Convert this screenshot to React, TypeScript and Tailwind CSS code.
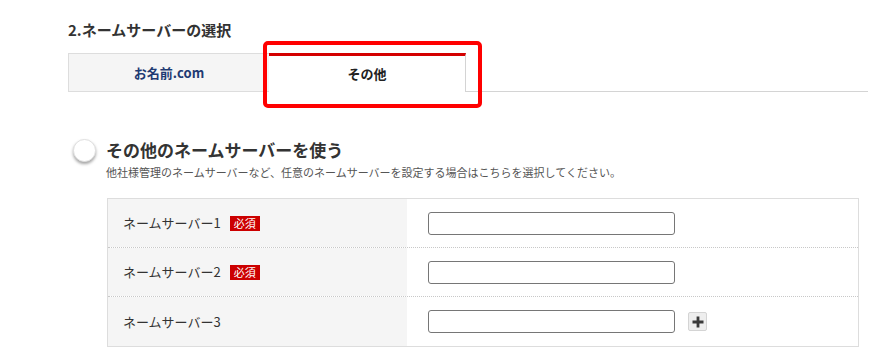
import React from 'react';

const font = { fontFamily: '"Noto Sans CJK JP", "Noto Sans", sans-serif' };

function Badge() {
  return (
    <span className="ml-[9px] inline-flex h-[15px] w-[30px] items-center justify-center bg-[#cc0000] text-[11px] leading-none text-white">
      必須
    </span>
  );
}

function Row({ label, required, plus, last }: { label: string; required?: boolean; plus?: boolean; last?: boolean }) {
  return (
    <div className={`flex h-[49px] ${last ? '' : 'border-b border-dotted border-[#c8c8c8]'}`}>
      <div className="flex w-[299px] items-center bg-[#f5f5f5] pl-[15px] text-[13px] text-[#333]">
        <span>{label}</span>
        {required && <Badge />}
      </div>
      <div className="flex flex-1 items-center pl-[21px]">
        <input className="h-[23px] w-[247px] rounded-[3px] border border-[#767676] bg-white" />
        {plus && (
          <button className="ml-[13px] flex h-[19px] w-[19px] items-center justify-center rounded-[2px] border border-[#d4d4d4] bg-[#eeeeee]">
            <svg width="14" height="14" viewBox="0 0 14 14">
              <path d="M7 1.5v11M1.5 7h11" stroke="#3a3a3a" strokeWidth="2.8" />
            </svg>
          </button>
        )}
      </div>
    </div>
  );
}

export default function App() {
  return (
    <div className="relative h-[350px] w-[873px] overflow-hidden bg-white" style={font}>
      <div className="w-[868px] pl-[68px] pt-[20px]">
        <h2 className="text-[15px] font-bold leading-[20px] text-[#333]">2.ネームサーバーの選択</h2>

        <div className="mt-[13px] flex h-[39px]">
          <div className="flex w-[201px] items-center justify-center border-l border-t border-b border-[#dddddd] bg-[#f5f5f5] text-[13px] font-bold text-[#1f3b73]">
            お名前.com
          </div>
          <div className="flex w-[197px] items-center justify-center border-t-[3px] border-r border-t-[#d40000] border-r-[#d4d4d4] bg-white text-[13px] font-bold text-[#222]">
            その他
          </div>
          <div className="flex-1 border-b border-[#d4d4d4]" />
        </div>

        <div className="mt-[46px] flex h-[24px] items-center pl-[5px]">
          <div className="h-[23px] w-[23px] rounded-full border border-[#e0e0e0] bg-white shadow-[0_2px_3px_rgba(0,0,0,0.35)]" />
          <h3 className="ml-[10px] text-[17px] font-bold leading-[24px] text-[#333]">その他のネームサーバーを使う</h3>
        </div>
        <p className="ml-[38px] mt-[2px] text-[11px] leading-[16px] text-[#555]">
          他社様管理のネームサーバーなど、任意のネームサーバーを設定する場合はこちらを選択してください。
        </p>

        <div className="ml-[39px] mt-[18px] w-[752px] border border-[#dddddd]">
          <Row label="ネームサーバー1" required />
          <Row label="ネームサーバー2" required />
          <Row label="ネームサーバー3" plus last />
        </div>
      </div>

      <div className="absolute left-[263px] top-[41px] h-[67px] w-[219px] rounded-[5px] border-4 border-[#ff0000]" />
    </div>
  );
}
